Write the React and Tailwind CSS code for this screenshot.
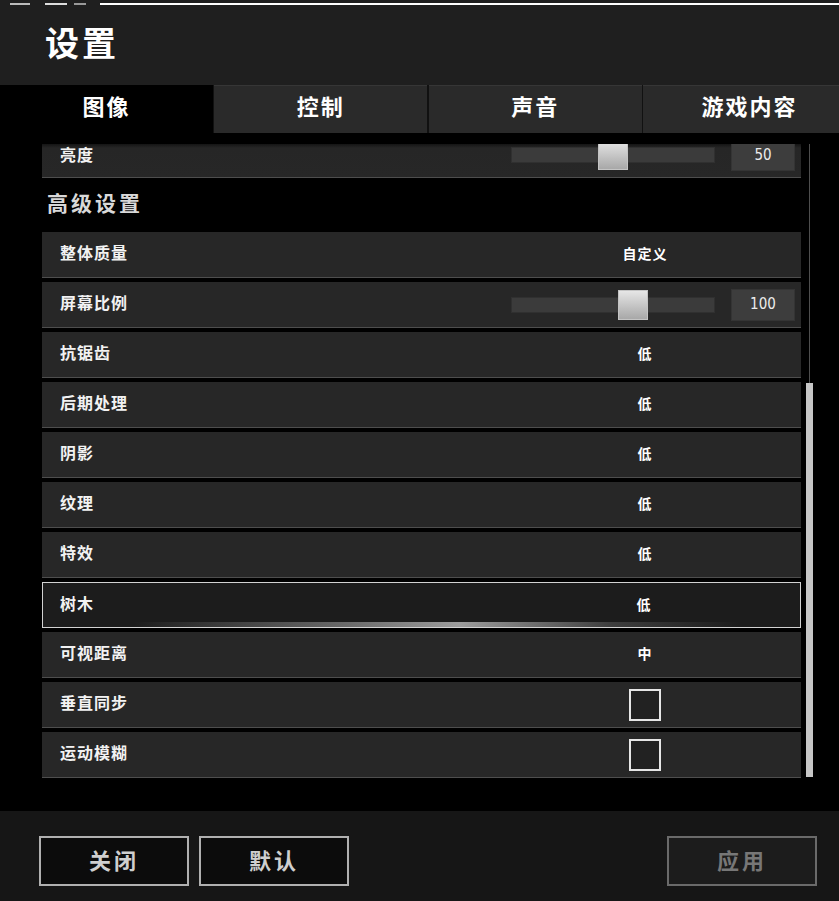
import React from "react";

function Row({ label, children, selected }) {
  return (
    <div
      className={
        selected
          ? "relative flex items-center h-[46px] bg-[#1c1c1c] border border-[#d2d2d2]"
          : "relative flex items-center h-[46px] bg-[#272727] border-b border-[#4e4e4e]"
      }
    >
      <div
        className={
          selected
            ? "flex-1 pl-[17px] pb-[5px] text-[16px] font-bold tracking-[1px] text-[#f2f2f2]"
            : "flex-1 pl-[18px] pb-[5px] text-[16px] font-bold tracking-[1px] text-[#f2f2f2]"
        }
      >
        {label}
      </div>
      <div className="w-[300px] mr-[6px] flex items-center justify-center">{children}</div>
      {selected && (
        <div className="absolute left-0 right-0 bottom-0 h-[5px] bg-[linear-gradient(to_right,transparent_12%,rgba(170,170,170,0.55)_40%,rgba(200,200,200,0.75)_55%,rgba(140,140,140,0.3)_75%,transparent_92%)]" />
      )}
    </div>
  );
}

function Value({ children }) {
  return <span className="pb-[2px] text-[14px] font-bold tracking-[1px] text-white">{children}</span>;
}

function Slider({ thumb, value }) {
  return (
    <div className="w-[300px] flex items-center pl-[16px]">
      <div className="relative w-[204px] h-[16px] bg-[#3b3b3b] border border-[#303030]">
        <div
          className={
            "absolute top-1/2 -translate-y-1/2 w-[30px] h-[30px] bg-linear-to-b from-[#e6e6e6] to-[#a8a8a8] border border-[#c4c4c4] " +
            thumb
          }
        />
      </div>
      <div className="ml-[16px] w-[64px] h-[32px] bg-[#3d3d3d] border border-[#343434] flex items-center justify-center text-[15px] text-[#ececec] font-['Liberation_Sans_Narrow','DejaVu_Sans_Condensed',sans-serif]">
        {value}
      </div>
    </div>
  );
}

function Check() {
  return <div className="w-[32px] h-[32px] border-2 border-[#e6e6e6] bg-[#222222]" />;
}

export default function App() {
  const rows = [
    ["抗锯齿", "低"],
    ["后期处理", "低"],
    ["阴影", "低"],
    ["纹理", "低"],
    ["特效", "低"],
  ];
  const tab = "flex items-center justify-center pb-[8px] text-[22px] font-bold tracking-[2px] text-white";
  const btn = "w-[150px] h-[50px] pb-[4px] border-2 text-[22px] font-bold tracking-[3px]";
  return (
    <div className="w-[839px] h-[901px] overflow-hidden bg-black font-['Noto_Sans_CJK_SC','Noto_Sans',sans-serif]">
      <div className="w-[856px] h-full flex flex-col">
        {/* header */}
        <div className="relative h-[85px] bg-[#1f1f1f] flex items-center pl-[45px] pb-[2px]">
          <div className="absolute top-[3px] left-[100px] right-0 h-[2px] bg-white" />
          <div className="absolute top-[3px] left-[10px] w-[20px] h-[2px] bg-[#bbb]" />
          <div className="absolute top-[3px] left-[45px] w-[22px] h-[2px] bg-[#ddd]" />
          <div className="absolute top-[3px] left-[74px] w-[12px] h-[2px] bg-[#999]" />
          <h1 className="text-[34px] font-bold tracking-[3px] text-white leading-none">设置</h1>
        </div>
        {/* tabs */}
        <div className="h-[48px] grid grid-cols-4 gap-[1.5px] bg-[#111111]">
          <div className={"bg-black " + tab}>图像</div>
          <div className={"bg-[#2a2a2a] border-t border-[#363636] " + tab}>控制</div>
          <div className={"bg-[#2a2a2a] border-t border-[#363636] " + tab}>声音</div>
          <div className={"bg-[#2a2a2a] border-t border-[#363636] " + tab}>游戏内容</div>
        </div>
        {/* content */}
        <div className="h-[678px] bg-black pt-[11px] pl-[42px] flex">
          <div className="w-[759px] h-[634px] flex flex-col">
            {/* partially scrolled-out first row */}
            <div className="h-[34px] shrink-0 flex items-start bg-[linear-gradient(to_bottom,#141414,#262626_4px,#272727)] border-b border-[#4e4e4e]">
              <div className="flex-1 pl-[18px] pt-[2px] leading-none text-[16px] font-bold tracking-[1px] text-[#f2f2f2]">亮度</div>
              <div className="w-[300px] mr-[6px] h-[33px] shrink-0 overflow-hidden">
                <div className="h-[46px] -mt-[12px] flex items-center justify-center">
                  <Slider thumb="left-[86px]" value="50" />
                </div>
              </div>
            </div>
            <div className="h-[54px] shrink-0 flex items-center pl-[5px] pb-[4px] text-[21px] font-bold tracking-[3px] text-[#d8d8d8]">高级设置</div>
            <div className="flex flex-col gap-[4px]">
              <Row label="整体质量">
                <Value>自定义</Value>
              </Row>
              <Row label="屏幕比例">
                <Slider thumb="left-[106px]" value="100" />
              </Row>
              {rows.map(([l, v]) => (
                <Row key={l} label={l}>
                  <Value>{v}</Value>
                </Row>
              ))}
              <Row label="树木" selected>
                <Value>低</Value>
              </Row>
              <Row label="可视距离">
                <Value>中</Value>
              </Row>
              <Row label="垂直同步">
                <Check />
              </Row>
              <Row label="运动模糊">
                <Check />
              </Row>
            </div>
          </div>
          {/* scrollbar */}
          <div className="ml-[5px] w-[7px] h-[634px] flex flex-col items-center">
            <div className="w-px h-[239px] bg-[#4e4e4e]" />
            <div className="w-[7px] h-[394px] bg-[#c6c6c6]" />
          </div>
        </div>
        {/* footer */}
        <div className="flex-1 bg-[#161616] px-[39px] pt-[25px] flex items-start">
          <button className={btn + " border-[#b0b0b0] bg-[#0c0c0c] text-[#cfcfcf]"}>关闭</button>
          <button className={btn + " ml-[10px] border-[#b0b0b0] bg-[#0c0c0c] text-[#cfcfcf]"}>默认</button>
          <button className={btn + " ml-auto border-[#6a6a6a] bg-[#1c1c1c] text-[#777777]"}>应用</button>
        </div>
      </div>
    </div>
  );
}
